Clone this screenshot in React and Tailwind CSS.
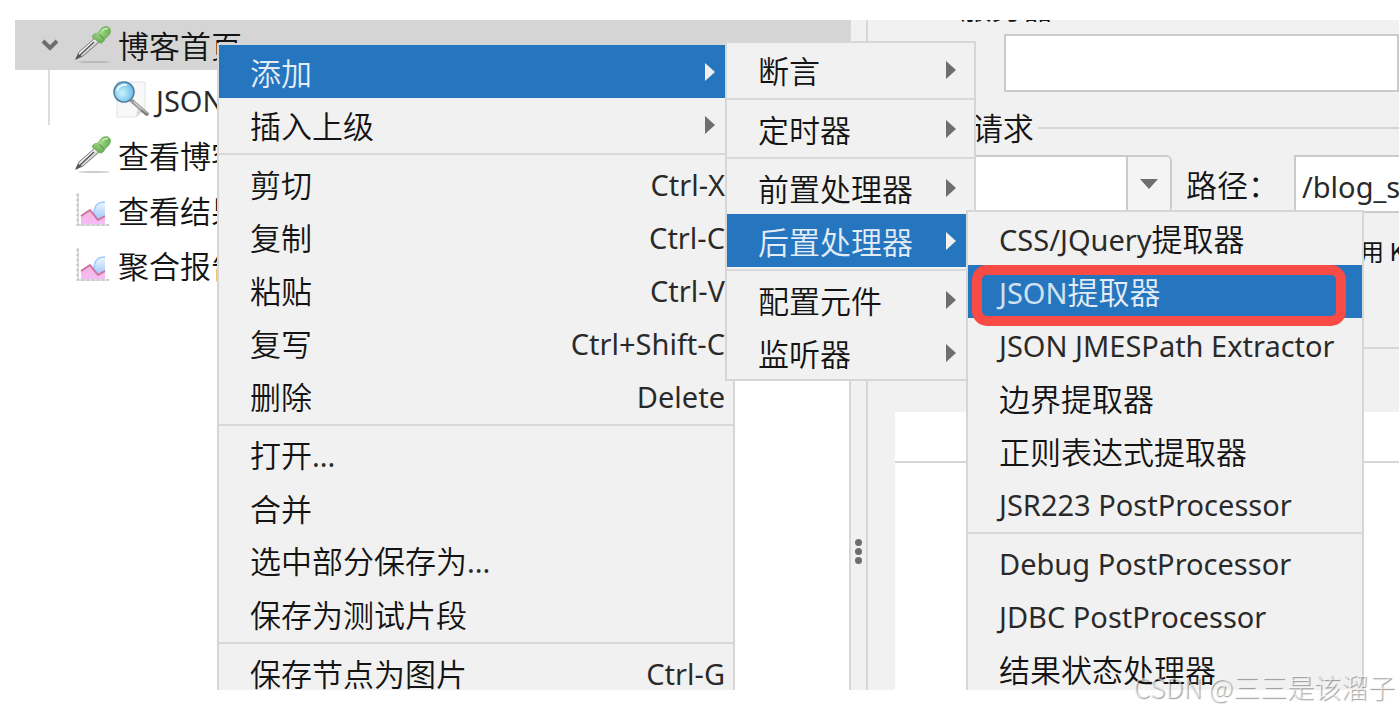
import React, { useState } from 'react';

const treeItems = [
  { id: 'home', label: '博客首页', icon: 'dropper', expanded: true },
  { id: 'json', label: 'JSON提取器', icon: 'search', child: true },
  { id: 'blog', label: '查看博客详情', icon: 'dropper' },
  { id: 'result', label: '查看结果树', icon: 'chart' },
  { id: 'report', label: '聚合报告', icon: 'chart' },
];

const mainMenu = [
  { label: '添加', arrow: true, active: true },
  { label: '插入上级', arrow: true },
  null,
  { label: '剪切', shortcut: 'Ctrl-X' },
  { label: '复制', shortcut: 'Ctrl-C' },
  { label: '粘贴', shortcut: 'Ctrl-V' },
  { label: '复写', shortcut: 'Ctrl+Shift-C' },
  { label: '删除', shortcut: 'Delete' },
  null,
  { label: '打开...' },
  { label: '合并' },
  { label: '选中部分保存为...' },
  { label: '保存为测试片段' },
  null,
  { label: '保存节点为图片', shortcut: 'Ctrl-G' },
];

const addMenu = [
  { label: '断言', arrow: true },
  null,
  { label: '定时器', arrow: true },
  null,
  { label: '前置处理器', arrow: true },
  { label: '后置处理器', arrow: true, active: true },
  null,
  { label: '配置元件', arrow: true },
  { label: '监听器', arrow: true },
];

const postMenu = [
  { label: 'CSS/JQuery提取器' },
  { label: 'JSON提取器', active: true, marked: true },
  { label: 'JSON JMESPath Extractor' },
  { label: '边界提取器' },
  { label: '正则表达式提取器' },
  { label: 'JSR223 PostProcessor' },
  null,
  { label: 'Debug PostProcessor' },
  { label: 'JDBC PostProcessor' },
  { label: '结果状态处理器' },
];

// Latin runs are set a little smaller than the Chinese ones
function Label({ text }) {
  const parts = text.match(/[\x20-\x7e]+|[^\x20-\x7e]+/g) || [];
  return (
    <span className="whitespace-pre text-[31px] leading-10">
      {parts.map((part, i) =>
        /[\x20-\x7e]/.test(part) ? (
          <span key={i} className="font-['Noto_Sans',sans-serif] text-[29px] font-normal opacity-90">{part}</span>
        ) : (
          <span key={i} className="font-[350]">{part}</span>
        )
      )}
    </span>
  );
}

function Dropper() {
  return (
    <svg width="38" height="38" viewBox="0 0 38 38" className="shrink-0" aria-hidden="true">
      <defs>
        <linearGradient id="glass" x1="0" y1="0" x2="1" y2="1">
          <stop offset="0" stopColor="#777" />
          <stop offset="0.45" stopColor="#f4f4f4" />
          <stop offset="1" stopColor="#555" />
        </linearGradient>
        <radialGradient id="bulb" cx="0.4" cy="0.35" r="0.7">
          <stop offset="0" stopColor="#a9dc8b" />
          <stop offset="1" stopColor="#5fa64b" />
        </radialGradient>
      </defs>
      <ellipse cx="20" cy="36" rx="16" ry="1" fill="#999" opacity="0.5" />
      <path d="M2 33 L5 26 L21 12 L25 16 L9 30 Z" fill="url(#glass)" stroke="#777" strokeLinejoin="round" />
      <path d="M5 30 L20 16" stroke="#555" strokeWidth="1.400" />
      <path d="M1 34 L4 28 L8 30 Z" fill="#555" />
      <path d="M19 9 C21 7 23 8 25 6 C27 1 31 0 34 1 C38 3 37 8 33 11 C31 12 31 14 29 16 C27 18 25 17 22 14 C19 12 17 11 19 9 Z" fill="url(#bulb)" stroke="#73ad61" strokeWidth="0.800" />
      <path d="M25 8 L30 13" stroke="#3f8231" strokeWidth="1.200" opacity="0.5" />
      <path d="M28 5 C30 3 32 2 34 3" stroke="#c6edb0" strokeWidth="1.600" fill="none" />
    </svg>
  );
}

function Magnifier() {
  return (
    <svg width="38" height="38" viewBox="0 0 38 38" className="shrink-0" aria-hidden="true">
      <defs>
        <radialGradient id="lens" cx="0.4" cy="0.55" r="0.6">
          <stop offset="0" stopColor="#c9f3fd" />
          <stop offset="1" stopColor="#6dbbe6" />
        </radialGradient>
      </defs>
      <path d="M5 1 H33 V28 L24 36 H5 Z" fill="#f8f8f8" stroke="#e2e2e2" />
      <path d="M24 36 L26 27 L33 28 Z" fill="#d4d8dd" />
      <path d="M20 20 L35 33" stroke="#999" strokeWidth="4" strokeLinecap="round" />
      <path d="M22 21 L34 32" stroke="#d6d6d6" strokeWidth="1.200" />
      <path d="M29 29 L35 34" stroke="#777" strokeWidth="2" />
      <circle cx="12" cy="11" r="10" fill="url(#lens)" stroke="#5581a5" strokeWidth="1.600" />
      <path d="M5 10 C6 5 11 3 15 4" stroke="#eafaff" strokeWidth="1.800" fill="none" />
    </svg>
  );
}

function Chart() {
  return (
    <svg width="38" height="38" viewBox="0 0 38 38" className="shrink-0" aria-hidden="true">
      <defs>
        <linearGradient id="area" x1="0" y1="0" x2="0" y2="1">
          <stop offset="0" stopColor="#f5b4d6" />
          <stop offset="1" stopColor="#f5bdf9" />
        </linearGradient>
        <linearGradient id="sky" x1="0" y1="0" x2="0" y2="1">
          <stop offset="0" stopColor="#f0f8ff" />
          <stop offset="1" stopColor="#9fc9fb" />
        </linearGradient>
      </defs>
      <path d="M20 24 C20 16 22 11 31 11 V28 H22 Z" fill="url(#sky)" />
      <path d="M20 23 C20 16 22 11 31 11" fill="none" stroke="#9dcafb" strokeWidth="1.600" />
      <path d="M7 33 V25 L16 19 L24 29 L31 25 V33 Z" fill="url(#area)" />
      <path d="M7 25 L16 19 L24 29 L31 25" fill="none" stroke="#d0709c" strokeWidth="2" strokeLinejoin="round" />
      <path d="M4 2 V34 H35" fill="none" stroke="#b8b8b8" />
      <path d="M2 4 H5 M2 9 H5 M2 14 H5 M2 19 H5 M2 24 H5 M2 29 H5 M2 34 H5 M9 33 V35 M14 33 V35 M19 33 V35 M24 33 V35 M29 33 V35 M34 33 V35" stroke="#b8b8b8" />
    </svg>
  );
}

const icons = { dropper: Dropper, search: Magnifier, chart: Chart };

function Arrow({ active }) {
  return (
    <svg width="10" height="18" viewBox="0 0 10 18" className="mr-2.5 shrink-0" aria-hidden="true">
      <path d="M0 0 L10 9 L0 18 Z" fill={active ? '#f1f1f1' : '#6e6e6e'} />
    </svg>
  );
}

function Menu({ items, className, name }) {
  return (
    <ul role="menu" aria-label={name} className={`absolute border-2 border-[#d6d6d6] bg-[#f1f1f1] ${className}`}>
      {items.map((item, i) =>
        item ? (
          <li key={i} role="none" className="relative">
            <button
              type="button"
              role="menuitem"
              className={`flex h-[53px] w-full items-center justify-between pl-[31px] pr-2 ${
                item.active ? 'bg-[#2675bf] text-[#e4edf5]' : ''
              }`}
            >
              <Label text={item.label} />
              {item.shortcut && <Label text={item.shortcut} />}
              {item.arrow && <Arrow active={item.active} />}
            </button>
            {item.marked && (
              <span className="pointer-events-none absolute left-1 right-4 top-0 z-10 h-[61px] rounded-[15px] border-10 border-[#f84b46]" />
            )}
          </li>
        ) : (
          <li key={i} role="separator" className="flex h-1.5 items-center">
            <span className="h-0.5 w-full bg-[#d9d9d9]" />
          </li>
        )
      )}
    </ul>
  );
}

function Tree() {
  return (
    <ul className="w-[61%] max-w-[836px] shrink-0 border-r-2 border-[#d6d6d6] bg-white">
      {treeItems.map((item) => {
        const Icon = icons[item.icon];
        return (
          <li
            key={item.id}
            className={`flex items-center ${item.expanded ? 'h-[50px] bg-[#d5d5d5] pl-[26px]' : 'h-[55px]'} ${
              item.child ? 'ml-[33px] border-l-2 border-[#dcdcdc] pl-[62px]' : ''
            } ${!item.expanded && !item.child ? 'pl-[59px]' : ''} ${item.expanded ? '' : 'pt-[5px]'}`}
          >
            {item.expanded && (
              <svg width="18" height="12" viewBox="0 0 18 12" className="mr-[15px]" aria-hidden="true">
                <path d="M2 2 L9 9 L16 2" fill="none" stroke="#6e6e6e" strokeWidth="4" />
              </svg>
            )}
            <Icon />
            <span className="pl-1.5"><Label text={item.label} /></span>
          </li>
        );
      })}
    </ul>
  );
}

function RequestPanel() {
  const [server, setServer] = useState('');
  const [path, setPath] = useState('/blog_system/blog_list.html');

  return (
    <section className="flex min-w-0 flex-1 flex-col overflow-hidden border-l-2 border-[#d6d6d6]">
      <div className="flex h-3.5 items-end pb-1.5 pl-8">
        <Label text="Web服务器" />
      </div>
      <input
        aria-label="服务器"
        value={server}
        onChange={(e) => setServer(e.target.value)}
        className="ml-[136px] h-[58px] shrink-0 border-2 border-[#cbcbcb] bg-white px-2 text-[29px]"
      />
      <div className="flex h-[63px] shrink-0 items-center gap-1 pl-8 pt-2">
        <Label text="HTTP请求" />
        <span className="h-0.5 flex-1 bg-[#d6d6d6]" />
      </div>
      <div className="flex h-[58px] shrink-0 items-center">
        <div className="relative ml-9 h-full w-[268px] shrink-0">
          <select
            aria-label="方法"
            className="h-full w-full appearance-none rounded-md border-2 border-[#cbcbcb] bg-white pl-2 text-[29px]"
          >
            <option>GET</option>
          </select>
          <span className="pointer-events-none absolute inset-y-0.5 right-0.5 flex w-11 items-center justify-center rounded-r border-l-2 border-[#cbcbcb] bg-[#f4f4f4]">
            <svg width="18" height="10" viewBox="0 0 18 10" aria-hidden="true">
              <path d="M0 0 H18 L9 10 Z" fill="#6e6e6e" />
            </svg>
          </span>
        </div>
        <label htmlFor="path" className="w-[122px] shrink-0 pl-3.5"><Label text="路径：" /></label>
        <input
          id="path"
          value={path}
          onChange={(e) => setPath(e.target.value)}
          className="h-full w-[600px] shrink-0 border-2 border-[#cbcbcb] bg-white pl-1.5 pt-1 font-['Noto_Sans',sans-serif] text-[29px] text-[#2a2a2a]"
        />
      </div>
      <div className="flex h-[136px] shrink-0 items-start border-b-2 border-[#d6d6d6] pl-[436px] pt-5">
        <label className="flex shrink-0 items-center gap-2 whitespace-pre text-[24px]">
          <input type="checkbox" defaultChecked className="size-6" />
          使用 KeepAlive
        </label>
      </div>
      <div className="ml-[27px] mt-[63px] h-[51px] shrink-0 border-b-2 border-[#d6d6d6] bg-white" />
      <div className="ml-[27px] flex-1 bg-white" />
    </section>
  );
}

export default function App() {
  return (
    <div className="relative h-screen overflow-hidden bg-white pb-[21px] pl-[15px] pt-5 font-['Noto_Sans_CJK_SC',sans-serif] text-[#141414]">
      <main className="relative flex h-full overflow-hidden bg-[#f1f1f1]">
        <Tree />
        <div className="flex w-[15px] shrink-0 flex-col items-center justify-center gap-0.5 pt-[392px]">
          <span className="size-[7px] rounded-full bg-[#6e6e6e]" />
          <span className="size-[7px] rounded-full bg-[#6e6e6e]" />
          <span className="size-[7px] rounded-full bg-[#6e6e6e]" />
        </div>
        <RequestPanel />

        <Menu name="节点" items={mainMenu} className="left-[202px] top-[23px] w-[518px]" />
        <Menu name="添加" items={addMenu} className="left-[710px] top-[21px] w-[251px]" />
        <Menu name="后置处理器" items={postMenu} className="left-[951px] top-[190px] w-[398px]" />
      </main>
      <p className="absolute bottom-1 right-1 whitespace-pre text-[27px] font-light leading-10 text-white/60 [text-shadow:1px_1px_1px_rgb(0_0_0/0.4)]">
        CSDN @三三是该溜子
      </p>
    </div>
  );
}
